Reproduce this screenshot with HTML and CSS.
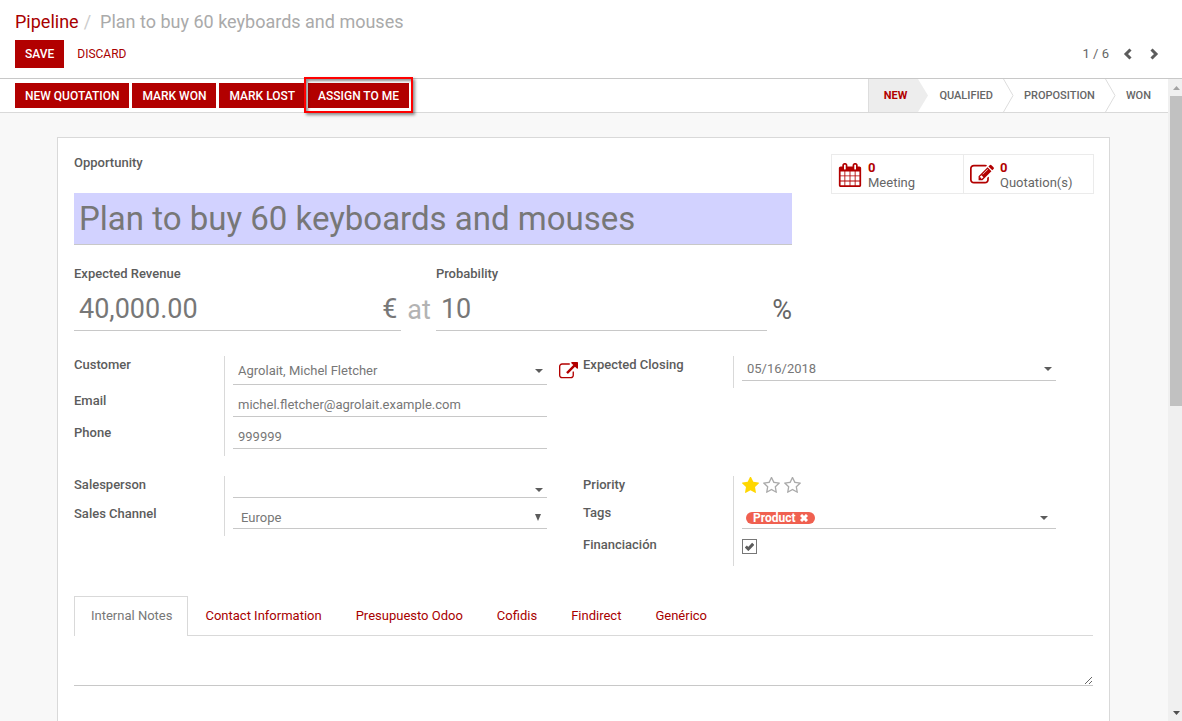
FILE: index.html
```html
<!DOCTYPE html>
<html lang="en">
<head>
<meta charset="utf-8">
<title>Plan to buy 60 keyboards and mouses</title>
<link rel="stylesheet" href="styles.css">
</head>
<body>
<svg class="defs" aria-hidden="true">
  <symbol id="calendar" viewBox="0 0 1792 1792"><path d="M192 1664h288v-288h-288v288zm352 0h320v-288h-320v288zm-352-352h288v-320h-288v320zm352 0h320v-320h-320v320zm-352-384h288v-288h-288v288zm736 736h320v-288h-320v288zm-384-736h320v-288h-320v288zm768 736h288v-288h-288v288zm-384-352h320v-320h-320v320zm-352-864v-288q0-13-9.5-22.5t-22.5-9.5h-64q-13 0-22.5 9.5t-9.5 22.5v288q0 13 9.5 22.5t22.5 9.5h64q13 0 22.5-9.5t9.5-22.5zm736 864h288v-320h-288v320zm-384-384h320v-288h-320v288zm384 0h288v-288h-288v288zm32-480v-288q0-13-9.5-22.5t-22.5-9.5h-64q-13 0-22.5 9.5t-9.5 22.5v288q0 13 9.5 22.5t22.5 9.5h64q13 0 22.5-9.5t9.5-22.5zm384-64v1280q0 52-38 90t-90 38h-1408q-52 0-90-38t-38-90v-1280q0-52 38-90t90-38h128v-96q0-66 47-113t113-47h64q66 0 113 47t47 113v96h384v-96q0-66 47-113t113-47h64q66 0 113 47t47 113v96h128q52 0 90 38t38 90z"/></symbol>
  <symbol id="edit" viewBox="0 0 1792 1792"><path d="M888 1184l116-116-152-152-116 116v56h96v96h56zm440-720q-16-16-33 1l-350 350q-17 17-1 33t33-1l350-350q17-17 1-33zm80 594v190q0 119-84.5 203.5t-203.5 84.5h-832q-119 0-203.5-84.5t-84.5-203.5v-832q0-119 84.5-203.5t203.5-84.5h832q63 0 117 25 15 7 18 23 3 17-9 29l-49 49q-14 14-32 8-23-6-45-6h-832q-66 0-113 47t-47 113v832q0 66 47 113t113 47h832q66 0 113-47t47-113v-126q0-13 9-22l64-64q15-15 35-7t20 29zm-96-738l288 288-672 672h-288v-288zm444 132l-92 92-288-288 92-92q28-28 68-28t68 28l152 152q28 28 28 68t-28 68z"/></symbol>
  <symbol id="external" viewBox="0 0 1792 1792"><path d="M1408 928v320q0 119-84.5 203.5t-203.5 84.5h-832q-119 0-203.5-84.5t-84.5-203.5v-832q0-119 84.5-203.5t203.5-84.5h704q14 0 23 9t9 23v64q0 14-9 23t-23 9h-704q-66 0-113 47t-47 113v832q0 66 47 113t113 47h832q66 0 113-47t47-113v-320q0-14 9-23t23-9h64q14 0 23 9t9 23zm384-864v512q0 26-19 45t-45 19-45-19l-176-176-652 652q-10 10-23 10t-23-10l-114-114q-10-10-10-23t10-23l652-652-176-176q-19-19-19-45t19-45 45-19h512q26 0 45 19t19 45z"/></symbol>
  <symbol id="star" viewBox="64 64 1664 1664"><path d="M1728 647q0 22-26 48l-363 354 86 500q1 7 1 20 0 21-10.5 35.5t-30.5 14.5q-19 0-40-12l-449-236-449 236q-22 12-40 12-21 0-31.5-14.5t-10.5-35.5q0-6 2-20l86-500-364-354q-25-27-25-48 0-37 56-46l502-73 225-455q19-41 49-41t49 41l225 455 502 73q56 9 56 46z"/></symbol>
  <symbol id="star-o" viewBox="64 64 1664 1664"><path d="M1201 1004l306-297-422-62-189-382-189 382-422 62 306 297-73 421 378-199 377 199zm527-357q0 22-26 48l-363 354 86 500q1 7 1 20 0 50-41 50-19 0-40-12l-449-236-449 236q-22 12-40 12-21 0-31.5-14.5t-10.5-35.5q0-6 2-20l86-500-364-354q-25-27-25-48 0-37 56-46l502-73 225-455q19-41 49-41t49 41l225 455 502 73q56 9 56 46z"/></symbol>
  <symbol id="caret" viewBox="0 0 8 4"><path d="M0 0h8L4 4z"/></symbol>
  <symbol id="sep" viewBox="0 0 11 33" preserveAspectRatio="none"><path d="M.5 0L10 16.500L.5 33" fill="none" stroke="#ddd"/></symbol>
</svg>

<header class="control-panel">
  <nav class="breadcrumb" aria-label="Breadcrumb">
    <a href="#">Pipeline</a><span class="slash">/</span><span class="current">Plan to buy 60 keyboards and mouses</span>
  </nav>
  <div class="panel-row">
    <div class="edit-actions">
      <button class="btn btn-save" type="button">SAVE</button>
      <button class="btn-link" type="button">DISCARD</button>
    </div>
    <div class="pager">
      <span>1 / 6</span>
      <button class="pager-btn" type="button" aria-label="Previous"><svg width="9" height="12" viewBox="0 0 9 12"><path d="M7.500 1.500L3 6l4.500 4.500"/></svg></button>
      <button class="pager-btn" type="button" aria-label="Next"><svg width="9" height="12" viewBox="0 0 9 12"><path d="M1.500 1.500L6 6l-4.500 4.500"/></svg></button>
    </div>
  </div>
</header>

<div class="body-row">
  <main class="content">
    <div class="statusbar">
      <div class="status-buttons">
        <button class="btn" type="button">NEW QUOTATION</button>
        <button class="btn" type="button">MARK WON</button>
        <button class="btn" type="button">MARK LOST</button>
        <span class="highlighted"><button class="btn" type="button">ASSIGN TO ME</button></span>
      </div>
      <div class="stages">
        <button class="stage stage-active" type="button">NEW</button>
        <svg class="sep" width="11" height="33" viewBox="0 0 11 33"><path d="M0 0L10 16.500L0 33z" fill="#ededed"/></svg>
        <button class="stage" type="button">QUALIFIED</button>
        <svg class="sep" width="11" height="33"><use href="#sep"/></svg>
        <button class="stage" type="button">PROPOSITION</button>
        <svg class="sep" width="11" height="33"><use href="#sep"/></svg>
        <button class="stage" type="button">WON</button>
      </div>
    </div>

    <div class="sheet-area">
      <form class="sheet">
        <div class="sheet-top">
          <label for="name">Opportunity</label>
          <div class="stats">
            <button class="stat" type="button"><svg width="24" height="24"><use href="#calendar"/></svg><span><b>0</b><br>Meeting</span></button>
            <button class="stat" type="button"><svg width="24" height="24"><use href="#edit"/></svg><span><b>0</b><br>Quotation(s)</span></button>
          </div>
        </div>
        <div class="headline">
          <input class="name" id="name" value="Plan to buy 60 keyboards and mouses">
          <div class="figures">
            <div class="figure">
              <label for="revenue">Expected Revenue</label>
              <div class="big-field"><input id="revenue" value="40,000.00"><span>€</span></div>
            </div>
            <span class="at">at</span>
            <div class="figure figure-wide">
              <label for="probability">Probability</label>
              <div class="big-field"><input id="probability" value="10"></div>
            </div>
            <span class="percent">%</span>
          </div>
        </div>

        <div class="groups">
          <div class="group">
            <div class="row row-xl"><label for="customer">Customer</label>
              <div class="value"><div class="field"><input id="customer" value="Agrolait, Michel Fletcher"><svg class="caret" width="8" height="4"><use href="#caret"/></svg></div><button class="ext" type="button" aria-label="Open customer"><svg width="19" height="19"><use href="#external"/></svg></button></div></div>
            <div class="row row-l"><label for="email">Email</label>
              <div class="value"><div class="field"><input id="email" value="michel.fletcher@agrolait.example.com"></div></div></div>
            <div class="row row-l"><label for="phone">Phone</label>
              <div class="value"><div class="field"><input id="phone" value="999999"></div></div></div>
          </div>
          <div class="group">
            <div class="row row-l"><label for="closing">Expected Closing</label>
              <div class="value"><div class="field"><input id="closing" value="05/16/2018"><svg class="caret" width="8" height="4"><use href="#caret"/></svg></div></div></div>
          </div>
          <div class="group">
            <div class="row row-s"><label for="salesperson">Salesperson</label>
              <div class="value"><div class="field field-low"><input id="salesperson" value=""><svg class="caret" width="8" height="4"><use href="#caret"/></svg></div></div></div>
            <div class="row row-m"><label for="channel">Sales Channel</label>
              <div class="value"><div class="field"><select id="channel"><option>Europe</option></select><svg class="caret caret-tall" width="6" height="7" viewBox="0 0 6 7"><path d="M0 0h6L3 7z"/></svg></div></div></div>
          </div>
          <div class="group">
            <div class="row row-xs"><span class="label">Priority</span>
              <div class="value"><div class="stars">
                <button type="button" class="star-on" aria-label="Low"><svg width="17" height="17"><use href="#star"/></svg></button>
                <button type="button" aria-label="High"><svg width="17" height="17"><use href="#star-o"/></svg></button>
                <button type="button" aria-label="Very high"><svg width="17" height="17"><use href="#star-o"/></svg></button>
              </div></div></div>
            <div class="row row-l"><label for="tags">Tags</label>
              <div class="value"><div class="field field-tags"><span class="tag">Product <button type="button" aria-label="Remove"><svg width="8" height="8" viewBox="0 0 8 8"><path d="M1 1l6 6M7 1L1 7"/></svg></button></span><input id="tags" value=""><svg class="caret" width="8" height="4"><use href="#caret"/></svg></div></div></div>
            <div class="row row-check"><label for="financing">Financiación</label>
              <div class="value"><div class="check"><input type="checkbox" id="financing" checked><svg width="9" height="9" viewBox="0 0 9 9"><path d="M.8 4.500L3.300 7L8.200 1.800"/></svg></div></div></div>
          </div>
        </div>

        <div class="tabs">
          <a class="tab tab-active" href="#notes">Internal Notes</a>
          <a class="tab" href="#contact">Contact Information</a>
          <a class="tab" href="#odoo">Presupuesto Odoo</a>
          <a class="tab" href="#cofidis">Cofidis</a>
          <a class="tab" href="#findirect">Findirect</a>
          <a class="tab" href="#generico">Genérico</a>
        </div>
        <textarea class="notes" id="notes" aria-label="Internal Notes"></textarea>
      </form>
    </div>
  </main>
  <div class="scrollbar" aria-hidden="true">
    <svg width="14" height="17" viewBox="0 0 14 17"><path d="M5 11h7L8.500 7z" fill="#a3a3a3"/></svg>
    <div class="track"><div class="thumb"></div></div>
    <svg width="14" height="17" viewBox="0 0 14 17"><path d="M5 7h7L8.500 11z" fill="#505050"/></svg>
  </div>
</div>
</body>
</html>
```

FILE: styles.css
```css
* { box-sizing: border-box; }

html, body { height: 100%; }

body {
  margin: 0;
  display: flex;
  flex-direction: column;
  overflow: hidden;
  background: #fff;
  color: #666;
  font: 13px/18px Roboto, "Liberation Sans", sans-serif;
}

.defs { display: none; }

svg { display: block; flex: none; fill: currentColor; }

button, input, select, textarea { font: inherit; color: inherit; margin: 0; }

button { padding: 0; border: 0; background: none; cursor: pointer; }

input, select {
  min-width: 0;
  width: 100%;
  padding: 0 5px;
  border: 0;
  background: none;
  outline: 0;
  appearance: none;
}

a { color: #a80000; text-decoration: none; }

label, .label { font-weight: 500; color: #5c5c5c; }

/* Control panel */
.control-panel {
  flex: none;
  padding: 10px 19px 10px 15px;
  border-bottom: 1px solid #c8c8c8;
}

.breadcrumb { font-size: 18px; line-height: 24px; }
.slash { color: #ccc; padding: 0 9px 0 5px; }
.current { color: #aaa; }

.panel-row { display: flex; justify-content: space-between; align-items: center; margin-top: 6px; }
.edit-actions { display: flex; align-items: center; gap: 13px; }

.btn {
  height: 25px;
  padding: 0 10px;
  background: #b20000;
  color: #fff;
  font-size: 12px;
  font-weight: 500;
  white-space: nowrap;
}
.btn-save { height: 28px; }
.btn-link { font-size: 12px; color: #a80000; }

.pager { display: flex; align-items: center; }
.pager-btn { padding: 0 4px; margin-left: 10px; }
.pager-btn path { fill: none; stroke: #5c5c5c; stroke-width: 3; }

.body-row { flex: 1; min-height: 0; display: flex; }
.content { flex: 1; min-width: 0; display: flex; flex-direction: column; }

/* Status bar */
.statusbar {
  flex: none;
  display: flex;
  justify-content: space-between;
  border-bottom: 1px solid #d9d9d9;
  padding-left: 15px;
}
.status-buttons { display: flex; align-items: center; gap: 3px; }

.highlighted { position: relative; display: flex; }
.highlighted::after {
  content: "";
  position: absolute;
  inset: -6px -4px -5px;
  border: 2px solid #f00;
  box-shadow: 2px 2px 3px rgba(0, 0, 0, .45), inset 2px 2px 3px rgba(0, 0, 0, .45);
  pointer-events: none;
}

.stages { display: flex; height: 33px; padding-right: 7px; }
.stage { padding: 0 10px; font-size: 11px; font-weight: 500; }
.stage-active {
  padding: 0 11px 0 15px;
  background: #ededed;
  border-left: 1px solid #ddd;
  color: #b20000;
  font-weight: 700;
}

/* Sheet */
.sheet-area { flex: 1; min-height: 0; overflow: hidden; background: #f8f8f8; padding: 24px 58px 0 57px; }
.sheet { padding: 16px 16px 60px; border: 1px solid #d9d9d9; background: #fff; }

.sheet-top { display: flex; justify-content: space-between; height: 39px; }

.stats { display: flex; height: 40px; margin-right: -1px; border: 1px solid #ebebeb; }
.stat {
  display: flex;
  align-items: center;
  gap: 6px;
  width: 131px;
  padding: 2px 0 0 6px;
  line-height: 15px;
  text-align: left;
}
.stat + .stat { width: 130px; border-left: 1px solid #ebebeb; }
.stat svg, .stat b { color: #b20000; }

.headline { width: 718px; max-width: 100%; }

.name {
  display: block;
  height: 52px;
  border-bottom: 1px solid #c8c8c8;
  background: #d2d2ff;
  color: #777;
  font-size: 33px;
}

.figures { display: flex; align-items: flex-end; margin-top: 20px; font-size: 27px; line-height: 32px; }
.figure { flex: 1 1 326px; }
.figure-wide { flex-basis: 330px; }
.figure label { display: block; font-size: 13px; line-height: 18px; }
.big-field { display: flex; align-items: center; height: 48px; border-bottom: 1px solid #c8c8c8; color: #777; padding: 4px 4px 0 0; }
.at { color: #b3b3b3; padding: 0 5px 5px 6px; }
.percent { padding: 0 0 5px 5px; }

.groups {
  display: grid;
  grid-template-columns: 1fr 1fr;
  align-items: start;
  gap: 20px 0;
  margin-top: 25px;
  padding-right: 1px;
}

.row { display: grid; grid-template-columns: 150px 1fr; }
.row-xs { height: 28px; }
.row-s { height: 29px; }
.row-check { height: 30px; }
.row-m { height: 31px; }
.row-l { height: 32px; }
.row-xl { height: 36px; }

.value { display: flex; padding: 0 5px 7px 8px; border-left: 1px solid #d9d9d9; }
.field {
  flex: 1;
  display: flex;
  align-items: center;
  margin-right: 31px;
  padding-top: 2px;
  border-bottom: 1px solid #c8c8c8;
  color: #777;
}
.field select { padding-left: 8px; }
.caret { color: #5c5c5c; margin-right: 4px; }
.caret-tall { margin-right: 6px; }
.field:has(+ .ext) { margin-right: 12px; }
.ext { color: #b20000; align-self: flex-end; padding-bottom: 4px; }

.field-low { align-items: flex-end; padding: 0; }
.field-low .caret { margin-bottom: 5px; }

.stars { display: flex; align-items: center; gap: 4px; height: 18px; color: #aaa; }
.star-on { color: #ffd700; }

.field-tags { padding: 4px 4px 0; }
.tag {
  display: flex;
  align-items: center;
  gap: 4px;
  height: 12px;
  padding: 0 7px;
  border-radius: 6px;
  background: #f06050;
  color: #fff;
  font-size: 12px;
  font-weight: 700;
}
.tag path { fill: none; stroke: #fff; stroke-width: 3; }

.check { position: relative; align-self: flex-start; margin-top: 3px; color: #444; }
.check input { display: block; width: 15px; height: 15px; padding: 0; border: 1px solid #777; background: #fff; }
.check svg { position: absolute; left: 3px; top: 3px; pointer-events: none; }
.check path { fill: none; stroke: #5c5c5c; stroke-width: 3; }

.tabs { display: flex; margin-top: 30px; border-bottom: 1px solid #d9d9d9; }
.tab { padding: 10px 16px; border: 1px solid transparent; border-bottom: 0; white-space: nowrap; }
.tab-active { margin-bottom: -1px; padding: 10px 15px 11px 16px; border-color: #d9d9d9; background: #fff; color: #777; }

.notes {
  display: block;
  width: 100%;
  height: 50px;
  border: 0;
  border-bottom: 1px solid #c8c8c8;
  padding: 4px;
  outline: 0;
  resize: vertical;
}

/* Scrollbar */
.scrollbar { flex: none; width: 14px; display: flex; flex-direction: column; background: #f0f0f0; }
.track { flex: 1; padding-left: 2px; }
.thumb { height: 51%; background: #c1c1c1; }
```
